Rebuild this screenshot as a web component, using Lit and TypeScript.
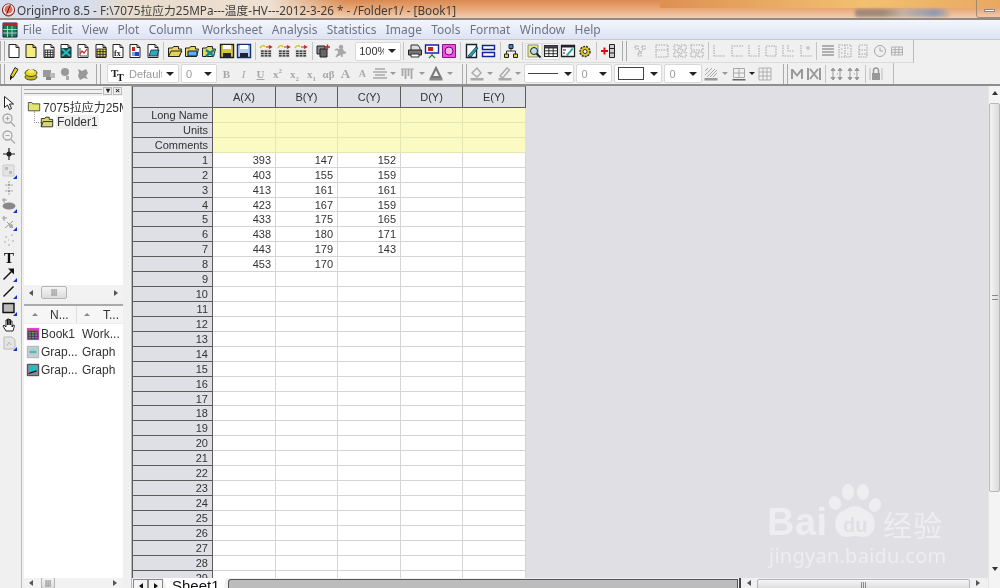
import { LitElement, html, css, svg, SVGTemplateResult } from 'lit';
import { customElement } from 'lit/decorators.js';

const page = (fill = '#fff') => svg`<path d="M3 1.5h7l3 3v10H3z" fill="${fill}" stroke="#222"/><path d="M10 1.5v3h3" fill="none" stroke="#222"/>`;
const gridLines = (x: number, y: number, w: number, h: number, c = '#222') => svg`<path d="M${x} ${y}h${w}v${h}h${-w}zM${x} ${y + h / 3}h${w}M${x} ${y + (2 * h) / 3}h${w}M${x + w / 3} ${y}v${h}M${x + (2 * w) / 3} ${y}v${h}" fill="none" stroke="${c}" stroke-width=".9"/>`;
const folder = (f = '#e8d860') => svg`<path d="M1.5 13.5V5h4l1-1.5h5V6h3l-2 7.5z" fill="${f}" stroke="#222"/>`;
const floppy = (f: string, c: string) => svg`<path d="M1.5 1.5h13v13h-13z" fill="${f}" stroke="${c}" stroke-width="1.4"/><path d="M4 2h8v4H4z" fill="#fff"/><path d="M4 10h8v4H4z" fill="#223"/>`;
const tblArrow = svg`<path d="M3 7h10v7H3z" fill="#333"/>${gridLines(2.5, 7, 11, 7, '#ddd')}<path d="M2 5c2-3 4-3 5-1" fill="none" stroke="#d8c020" stroke-width="1.5"/><path d="M8 4h5M11 2.5 13.500 4 11 5.500" fill="none" stroke="#d02020" stroke-width="1.2"/>`;
const blueCorner = svg`<path d="M16 12v4h-4z" fill="#1030d0"/>`;
const g = '#a8a8a8';
const dash = (d: string) => svg`<path d="${d}" fill="none" stroke="${g}" stroke-dasharray="1.5 1" stroke-width="1.1"/>`;

const I: Record<string, SVGTemplateResult> = {
  new: page(),
  yellow: page('#f4ec80'),
  wks: svg`${page()}${gridLines(4, 7, 8, 7)}`,
  mat: svg`${page()}<path d="M3 5h10v9H3z" fill="#244"/><path d="M4 6l8 7M12 6l-8 7" stroke="#20c0c0" stroke-width="2"/>`,
  graph: svg`${page()}<path d="M5 5v8h7" fill="none" stroke="#555"/><path d="M5 11l2-3 2 2 3-4" fill="none" stroke="#d02020" stroke-width="1.2"/>`,
  ygrid: svg`${page()}<path d="M4 6h9v8H4z" fill="#e8d840"/>${gridLines(4, 6, 9, 8)}`,
  fx: svg`${page()}<text x="4" y="13" font-size="8" font-family="Liberation Serif" font-weight="700" fill="#222">fx</text>`,
  layout: svg`${page()}<path d="M5 4h3v4H5z" fill="#d02020"/><path d="M8 9h4v4H8z" fill="#2040d0"/><path d="M5 9h3v4H5z" fill="#80a0e0"/>`,
  note: svg`${page()}<path d="M4 13l2-6h8l-2 6z" fill="#30a8b8" stroke="#124" stroke-width=".8"/>`,
  open: svg`${folder()}<path d="M4 8h11l-3 5.500H1.500z" fill="#e8d050" stroke="#222"/>`,
  fblue: svg`${folder('#e8d860')}<path d="M4 8h9v5H4z" fill="#58b0f0" stroke="#123"/>`,
  fteal: svg`${folder('#e8d860')}<path d="M5 7l8 6M13 7l-8 6" stroke="#108890" stroke-width="2.2"/>`,
  sav: floppy('#d8c830', '#222'),
  savb: floppy('#b8d0f0', '#123070'),
  tbl: tblArrow,
  stack: svg`<path d="M2 3h8v8H2z" fill="#888" stroke="#222"/><path d="M5 6h7v8H5z" fill="#666" stroke="#222"/><path d="M10 4h5M12.500 1.500v5" stroke="#d02020" stroke-width="1.400"/>`,
  run: svg`<path d="M9 2.500a1.500 1.500 0 1 0 .1 0zM4 14l3-4-1-3 4-1 2 3 2 1M7 10l3 1v3M3 7l3-1" fill="${g}" stroke="${g}" stroke-width="1.500"/>`,
  print: svg`<path d="M4 2h7l2 3v3H4z" fill="#ddd" stroke="#333"/><path d="M1.500 7h13v5h-13z" fill="#777" stroke="#222"/><path d="M4 11h8v3H4z" fill="#fff" stroke="#333"/>`,
  board: svg`<path d="M1.500 2h13v8h-13z" fill="#fff" stroke="#2020b0" stroke-width="1.400"/><path d="M4 4h5v4H4z" fill="#d02020"/><path d="M8 10v2M5 15l3-3 3 3" stroke="#2a7a30" stroke-width="1.200" fill="none"/>`,
  magenta: svg`<path d="M1.500 1.500h13v13h-13z" fill="#f050e0" stroke="#901090"/><circle cx="8" cy="8" r="4" fill="#f8b0f0" stroke="#601060"/>`,
  pen: svg`<path d="M2.500 1.500h10v13h-10z" fill="#fff" stroke="#123" stroke-width="1.400"/><path d="M4 13l8-9 2 1-7 9z" fill="#20a0b0" stroke="#123" stroke-width=".7"/>`,
  twoline: svg`<path d="M1.500 2.500h12v4h-12zM1.500 9.500h12v4h-12z" fill="#fff" stroke="#1020a0" stroke-width="1.400"/>`,
  net: svg`<path d="M8 5v3M3.500 11V8h9v3" fill="none" stroke="#333"/><path d="M6 1.500h4v4H6z" fill="#4080d0" stroke="#222"/><path d="M1.500 11h4v3.500h-4zM10.500 11h4v3.500h-4z" fill="#e8d040" stroke="#222"/>`,
  zoomy: svg`<path d="M2 2h10v12H2z" fill="#f0e878" stroke="#888"/><circle cx="8" cy="8" r="3.500" fill="#bde" stroke="#123"/><path d="M10.500 10.500l4 4" stroke="#123" stroke-width="2"/>`,
  table: svg`<path d="M1.500 2.500h13v11h-13z" fill="#fff" stroke="#222" stroke-width="1.200"/><path d="M1.500 2.500h13v2.500h-13z" fill="#445"/>${gridLines(1.5, 5, 13, 8.5)}`,
  notes: svg`<path d="M1.500 2.500h13v11h-13z" fill="#fff" stroke="#222" stroke-width="1.300"/><path d="M1.500 2.500h13v2h-13z" fill="#223"/><path d="M6 12l6-7 1.500 1-6 7z" fill="#20a0b0"/><path d="M3 7h3M3 10h2" stroke="#222"/>`,
  gear: svg`<circle cx="8" cy="8.500" r="5" fill="#e0c820" stroke="#333" stroke-width="1.500" stroke-dasharray="2 1"/><circle cx="8" cy="8.500" r="2" fill="#fff" stroke="#333"/>`,
  addcol: svg`<path d="M9.500 1.500h5v13h-5zM9.500 5.500h5M9.500 10h5" fill="#ccc" stroke="#222"/><path d="M1 8h7M4.500 4.500v7" stroke="#e01010" stroke-width="2"/>`,
  gnet: dash('M3 3h3v3H3zM10 3h3v3h-3zM6 10h3v3H6zM6 5l2 5M11 6l-3 4'),
  g1: dash('M2 2h12v12H2zM2 7h12'),
  g2: dash('M2 2h5v5H2zM9 2h5v5H9zM2 9h5v5H2zM9 9h5v5H9z'),
  g3: dash('M2 2h12v5H2zM2 9h5v5H2zM9 9h5v5H9z'),
  a1: dash('M3 2v11h11'),
  a2: dash('M14 3H3v10h11'),
  a3: dash('M3 2v11h10V2'),
  a4: dash('M3 3h10v10H3z'),
  a5: dash('M3 2v11h11M8 2v6h6'),
  a6: dash('M3 2v11h11M10 3v4M8 5h5'),
  lines: svg`<path d="M2 3h12M2 6h12M2 9h12M2 12h12" stroke="#999" stroke-width="1.600"/>`,
  lay2: dash('M2 2h12v12H2zM8 2v12M4 6h2M4 10h2M10 5h2M10 11h2'),
  lay3: dash('M4 2h8v12H4zM4 7h8M4 11h8'),
  clock: svg`<circle cx="8" cy="8" r="5.500" fill="none" stroke="${g}"/><path d="M8 4.500V8h3" fill="none" stroke="${g}"/>`,
  gtable: gridLines(2.5, 4, 11, 8, g),
  brush: svg`<path d="M9 1.500l3 2-5 8-2.500-1.500z" fill="#e8d020" stroke="#222"/><path d="M4 10l2.500 1.500L4 14.500z" fill="#111"/>`,
  ystack: svg`<ellipse cx="8" cy="11" rx="6" ry="3" fill="#c8b810" stroke="#444"/><ellipse cx="8" cy="7" rx="6" ry="3.500" fill="#e8d820" stroke="#444"/><ellipse cx="8" cy="5" rx="3" ry="2" fill="#f4ec70"/>`,
  gs1: svg`<path d="M2 4h8v7H2z" fill="#999"/><path d="M9 7h5v5H9z" fill="#bbb"/><path d="M5 11h5v3H5z" fill="#888"/>`,
  gs2: svg`<circle cx="7" cy="6" r="4" fill="#999"/><path d="M8 10h3v4H8z" fill="#aaa"/>`,
  gs3: svg`<path d="M3 3l4 2 4-2 2 4-2 3 2 3-4-1-4 2-2-4 1-3z" fill="#999"/>`,
  tfont: svg`<text x="1" y="11" font-size="11" font-family="Liberation Serif" font-weight="700" fill="#222">T</text><text x="7" y="15" font-size="10" font-family="Liberation Serif" font-weight="700" fill="#111">T</text>`,
  alignc: svg`<path d="M3 3h10M1 6h14M3 9h10M1 12h14" stroke="${g}" stroke-width="1.300"/>`,
  bars: svg`<path d="M2.500 3v7M5.500 3v10M8.500 3v7M11.500 3v10" stroke="${g}" stroke-width="1.800"/><path d="M1 3h13" stroke="${g}"/>`,
  acolor: svg`<path d="M8 2l4.500 9h-9z" fill="none" stroke="#777" stroke-width="2"/><path d="M1.500 12h13v2.500h-13z" fill="#888"/>`,
  fill: svg`<path d="M3 7l5-5 4 5-4 4z" fill="none" stroke="${g}" stroke-width="1.400"/><path d="M1.500 12h13v2.500h-13z" fill="#aaa"/>`,
  penc: svg`<path d="M3 10l7-8 2.500 2-7 8z" fill="none" stroke="${g}" stroke-width="1.300"/><path d="M1.500 12h13v2.500h-13z" fill="#aaa"/>`,
  hatch: svg`<path d="M2 9l7-7M4 11l8-8M7 11l7-7M2 5l3-3M10 11l4-4" stroke="${g}"/><path d="M1.500 12h13v2.500h-13z" fill="#999"/>`,
  bord: svg`<path d="M2.500 2.500h11v9h-11zM8 2.500v9M2.500 7h11" fill="none" stroke="${g}"/><path d="M1.500 13h13v1.500h-13z" fill="#666"/>`,
  gtbl2: gridLines(2, 2, 12, 12, g),
  mm: svg`<path d="M2 3h2l4 5 4-5h2v10h-2V6l-4 5-4-5v7H2z" fill="#999"/>`,
  mx: svg`<path d="M2 2v12M14 2v12" stroke="#999" stroke-width="2"/><path d="M4 3l8 10M12 3l-8 10" stroke="#999" stroke-width="2"/>`,
  upd: svg`<path d="M4 3v10M4 2l-2 2.500h4zM4 14l-2-2.500h4zM11 3v10M11 2L9 4.500h4zM11 14l-2-2.500h4z" fill="#999" stroke="#999"/><path d="M8 8h1" stroke="#999"/>`,
  lock: svg`<path d="M2 2v12M14 2v12" stroke="#bbb"/><path d="M4 7h8v7H4z" fill="#999"/><path d="M5.500 7V4.500a2.500 2.500 0 0 1 5 0V7" fill="none" stroke="#999" stroke-width="1.500"/>`,
  arrow: svg`<path d="M3.500 1.500v11l3-2.500 2 4.500 2-1-2-4.500h4z" fill="#fff" stroke="#222"/>`,
  zin: svg`<circle cx="6.500" cy="6.500" r="4.500" fill="none" stroke="${g}" stroke-width="1.300"/><path d="M9.500 10l4.500 4.500M4.500 6.500h4M6.500 4.500v4" stroke="${g}" stroke-width="1.200"/>`,
  zout: svg`<circle cx="6.500" cy="6.500" r="4.500" fill="none" stroke="${g}" stroke-width="1.300"/><path d="M9.500 10l4.500 4.500M4.500 6.500h4" stroke="${g}" stroke-width="1.200"/>`,
  cross: svg`<circle cx="8" cy="8" r="2.500" fill="#222"/><path d="M8 2v12M2 8h12" stroke="#222" stroke-width="1.200"/>`,
  selbox: svg`<path d="M2 2h11v11H2z" fill="#e4e4e4" stroke="#ccc"/><path d="M4 4h3v3H4zM8 8h3v3H8z" fill="#bbb"/>${blueCorner}`,
  mask: svg`<path d="M8 1v14M4 5h8M4 11h8" stroke="${g}" stroke-dasharray="2 1"/><path d="M8 3.500l-2 2h4zM8 12.500l-2-2h4z" fill="#999"/>`,
  blob: svg`<ellipse cx="8" cy="9" rx="6.500" ry="3.500" fill="#888"/><path d="M3 1v5M1 3h5" stroke="#999"/>${blueCorner}`,
  scat: svg`<path d="M3 1v5M1 3h5M4 13l8-7M6 7l6 6" stroke="#999"/><circle cx="10" cy="11" r="2" fill="#aaa"/>${blueCorner}`,
  dots: svg`<path d="M4 5h2M10 3h2M3 10h2M7 8h1M11 9h2M7 13h2" stroke="#aaa"/>`,
  T: svg`<text x="8" y="14" text-anchor="middle" font-size="15" font-family="Liberation Serif" font-weight="700" fill="#111">T</text>`,
  arr2: svg`<path d="M2.500 13.500l9-9" stroke="#111" stroke-width="1.500"/><path d="M13 2.500v6l-6-6z" fill="#111"/>${blueCorner}`,
  line: svg`<path d="M2.500 13.500l10-10" stroke="#111" stroke-width="1.400"/>${blueCorner}`,
  rect: svg`<path d="M2 3.500h11v9H2z" fill="#bbb" stroke="#111" stroke-width="1.400"/>${blueCorner}`,
  hand: svg`<path d="M5 14l-3-5 1-1 2 2V3h1.500v5-6H8v6-5.500h1.500V8 4H11v6l1-2 1.500.5-1.500 5.500z" fill="#fff" stroke="#111" stroke-width=".9"/>`,
  gdoc: svg`<path d="M3 2h8l3 3v9H3z" fill="#e4e4e4" stroke="#bbb"/><path d="M6 11l2-4 2 3" fill="none" stroke="#bbb"/>${blueCorner}`,
  book: svg`<path d="M1 1h14v14H1z" fill="#e040e0"/><path d="M2.500 3h11v10.500h-11z" fill="#7a8a70"/><path d="M2.500 3h11v2h-11z" fill="#c05050"/>${gridLines(2.5, 5, 11, 8.5, '#334')}`,
  grapa: svg`<path d="M1.500 1.500h13v13h-13z" fill="#c8ccd0" stroke="#aaa"/><path d="M4 4h8v7H4z" fill="#90d8d8"/><path d="M4 8h8" stroke="#666"/>`,
  grapb: svg`<path d="M1.500 1.500h13v13h-13z" fill="#889" stroke="#333"/><path d="M4 3h8v6H4z" fill="#10c8c8"/><path d="M3 12l9-3" stroke="#111" stroke-width="1.500"/>`,
  foldopen: svg`<path d="M1.500 13.500V4h4l1-1.500h4V5h4v8.500z" fill="#d8d870" stroke="#222"/><path d="M1.500 13.500l2-6h11" fill="none" stroke="#222"/>`,
  foldclosed: svg`<path d="M1.500 13.500V4h4l1 1.500h8v8z" fill="#e4e470" stroke="#444"/>`,
  menuGrid: svg`<path d="M1 1h14v14H1z" fill="#1e7a52" stroke="#123"/><path d="M1 1h14v3H1z" fill="#c02020"/><path d="M1 7.500h14M1 11h14M5.500 4v11M10 4v11" stroke="#cde" stroke-width=".8"/>`,
  appIcon: svg`<circle cx="8" cy="8.500" r="6.500" fill="#e07060" stroke="#702020"/><path d="M8 3a5 5 0 1 0 .1 0" fill="none" stroke="#fff" stroke-width="1.200"/><path d="M6 13l4-10" stroke="#401010"/>`,
};

const tb1: (string | number)[] = ['new', 'yellow', 'wks', 'mat', 'graph', 'ygrid', 'fx', 'layout', 'note', 0,
  'open', 'fblue', 'fteal', 'sav', 'savb', 0, 'tbl', 'tbl', 'tbl', 0, 'stack', 'run'];
const tb1b: (string | number)[] = [0, 'print', 'board', 'magenta', 0, 'pen', 'twoline', 0, 'net', 0,
  'zoomy', 'table', 'notes', 'gear', 0, 'addcol'];
const tb1c: (string | number)[] = ['g1', 'g2', 'g3', 0, 'a1', 'a2', 'a3', 'a4', 'a5', 'a6', 0, 'lines', 'lay2', 'lay3', 'clock', 'gtable'];
const tools = ['arrow', 'zin', 'zout', 'cross', 'selbox', 'mask', 'blob', 'scat', 'dots', 'T', 'arr2', 'line', 'rect', 'hand', 'gdoc'];

const menus = ['File', 'Edit', 'View', 'Plot', 'Column', 'Worksheet', 'Analysis', 'Statistics', 'Image', 'Tools', 'Format', 'Window', 'Help'];
const colA = [393, 403, 413, 423, 433, 438, 443, 453];
const colB = [147, 155, 161, 167, 175, 180, 179, 170];
const colC = [152, 159, 161, 159, 165, 171, 143];
const meta = ['Long Name', 'Units', 'Comments'];
const numRows = Array.from({ length: 29 }, (_, i) => i + 1);

@customElement('app-root')
export class AppRoot extends LitElement {
  static styles = css`
    :host {
      display: block;
      width: 1000px;
      height: 588px;
      overflow: hidden;
      position: relative;
      background: #f0f0f0;
      font-family: "Liberation Sans", "Noto Sans CJK SC", sans-serif;
      filter: blur(0.45px);
    }
    svg { display: block; flex: none; }
    .title {
      height: 18px;
      display: flex;
      align-items: center;
      gap: 1px;
      padding-left: 1px;
      position: relative;
      background:
        linear-gradient(90deg, #d6deee 0, #d6deee 85px, #e8dccc 130px, #eee0d2 270px, rgba(238, 224, 210, 0) 345px),
        linear-gradient(180deg, #d98a52 0, #e9a878 9px, #f0cfb4 18px);
      font: 11.75px "Noto Sans", "Noto Sans CJK SC", sans-serif;
      color: #3c3c3c;
      white-space: nowrap;
      border-bottom: 2px solid #8f8b88;
    }
    .title .warm {
      position: absolute;
      left: 660px; right: 0; top: 0; height: 8px;
      background: linear-gradient(90deg, #de9050, #f2c070 60%, #e8a860);
    }
    .title .smear {
      position: absolute;
      left: 855px; top: 9px; width: 95px; height: 8px;
      background: linear-gradient(90deg, #8a7a70 0, #8a7a70 30%, #b8b0a8 50%, #7090c0 85%, #d0b090);
      border-radius: 3px;
      filter: blur(1.5px);
      opacity: .75;
    }
    .title .text { position: relative; }
    .title .min {
      position: absolute;
      right: -1px; top: -1px;
      width: 25px; height: 19px;
      box-sizing: border-box;
      border: 1px solid #a08a70;
      border-radius: 0 0 0 3px;
    }
    .title .min::after {
      content: '';
      position: absolute;
      left: 7px; top: 9px;
      width: 11px; height: 3px;
      background: #fff;
      border: 1px solid #888;
      box-sizing: border-box;
    }
    .menu {
      height: 19px;
      display: flex;
      align-items: center;
      background: linear-gradient(180deg, #f4f6fc, #dde3f4);
      font: 12px "Noto Sans", sans-serif;
      color: #6e7484;
      border-bottom: 1px solid #c8c8c8;
    }
    .menu .ico { margin: 0 0 0 2px; }
    .menu span { padding: 0 4.65px; }
    .bar {
      height: 22px;
      display: flex;
      align-items: center;
      background: #f0f0f0;
    }
    .bar.one { border-bottom: 1px solid #dcdcdc; width: 913px; border-right: 1px solid #bbb; }
    .bar.two { height: 21px; width: 893px; border-right: 1px solid #bbb; }
    .rowline { background: #f0f0f0; }
    .rowline.second { border-bottom: 2px solid #8e8e8e; }
    .slot { width: 17.3px; height: 17px; display: flex; align-items: center; justify-content: center; flex: none; }
    .slot.on { background: #f8f8f8; outline: 1px solid #ddd; outline-offset: -1px; }
    .sep { width: 1px; height: 18px; margin: 0 2px; background: #c4c4c4; flex: none; }
    .grip { width: 3px; height: 20px; margin: 0 .5px 0 0; border-left: 1px solid #aaa; border-right: 1px solid #aaa; flex: none; }
    .grip.fontbar { margin: 0 6px 0 4px; }
    .grip.fillbar { margin: 0 1px 0 6px; }
    .grip.layerbar { margin: 0 0 0 10px; }
    .grip.plotbar { margin: 0 4px 0 6px; }
    .spc { flex: none; }
    .combo {
      height: 19px;
      box-sizing: border-box;
      display: flex;
      align-items: center;
      background: #fff;
      border: 1px solid #d8d8d8;
      border-radius: 2px;
      flex: none;
      overflow: hidden;
      font-size: 11px;
      color: #333;
      position: relative;
    }
    .combo .val { flex: 1; min-width: 0; padding-left: 4px; white-space: nowrap; overflow: hidden; }
    .combo .val.grey { color: #999; font-size: 11px; }
    .combo .swatchline { margin-left: 3px; width: 30px; height: 1px; background: #444; flex: none; }
    .combo .swatchbox { margin-left: 3px; width: 24px; height: 11px; border: 1px solid #444; flex: none; }
    .drop { width: 0; height: 0; border: 4px solid transparent; border-top: 4px solid #222; border-bottom: 0; margin: 0 4px; flex: none; }
    .drop.tight { margin: 0 3px; }
    .drop.small { margin: 0 1px; border-width: 3px; }
    .dropg { width: 0; height: 0; border: 3px solid transparent; border-top: 3px solid #999; border-bottom: 0; margin: 0 3px 0 2px; flex: none; }
    .fm { width: 17px; text-align: center; color: #a8a8a8; font: 700 11px "Liberation Serif", serif; flex: none; }
    .fm i { font-weight: 400; }
    .fm sup, .fm sub { font-size: 7px; line-height: 0; }
    .fm.u { text-decoration: underline; }
    .fm.big { font-size: 13px; }
    .fm.small { font-size: 10px; }
    .body { display: flex; height: 502px; }
    .tools { width: 21px; box-sizing: border-box; padding: 8px 4px 0 0; display: flex; flex-direction: column; align-items: center; flex: none; }
    .tools .slot { height: 17.15px; }
    .panel {
      width: 102px;
      flex: none;
      box-sizing: border-box;
      border-left: 1px solid #c0c0c0;
      padding-left: 2px;
      display: flex;
      flex-direction: column;
    }
    .phead { height: 10px; display: flex; align-items: center; gap: 1px; padding-right: 1px; }
    .phead .lines { flex: 1; height: 3px; border-top: 1px solid #aaa; border-bottom: 1px solid #aaa; }
    .phead b {
      width: 9px; height: 8px;
      border: 1px solid #bbb;
      box-sizing: border-box;
      font: 700 8px/6px "Liberation Sans", sans-serif;
      text-align: center;
      color: #222;
      background: #eee;
    }
    .tree {
      height: 189px;
      background: #fff;
      font-size: 12px;
      color: #333;
      overflow: hidden;
    }
    .tnode { display: flex; align-items: center; height: 16px; white-space: nowrap; gap: 2px; }
    .tnode.root { padding-left: 3px; margin-top: 2px; }
    .tnode.child { padding-left: 16px; position: relative; }
    .tnode.child::before {
      content: '';
      position: absolute;
      left: 10px; top: -3px;
      width: 6px; height: 11px;
      border-left: 1px dotted #999;
      border-bottom: 1px dotted #999;
    }
    .tnode.child span { background: #f0f0f0; padding: 0 1px; }
    .hbar { height: 15px; display: flex; align-items: center; background: #f2f2f2; position: relative; }
    .hbar.low { height: 10px; overflow: hidden; }
    .thumb {
      box-sizing: border-box;
      height: 13px;
      background: linear-gradient(180deg, #f4f4f4, #dcdcdc);
      border: 1px solid #b4b4b4;
      border-radius: 2px;
      color: #555;
      font: 8px/10px "Liberation Sans", sans-serif;
      text-align: center;
      flex: none;
    }
    .hbar .thumb.big { width: 26px; margin: 0 47px 0 8px; }
    .hbar .thumb.small { width: 14px; height: 12px; margin: 0 58px 0 8px; }
    .hbar .al { margin-left: 5px; }
    .al { width: 0; height: 0; border: 3px solid transparent; border-right: 4px solid #555; border-left: 0; flex: none; }
    .ar { width: 0; height: 0; border: 3px solid transparent; border-left: 4px solid #555; border-right: 0; flex: none; }
    .split { height: 6px; border-bottom: 2px solid #aaa; box-sizing: border-box; }
    .list { flex: 1; background: #fff; font-size: 12px; color: #333; overflow: hidden; }
    .lhead { height: 18px; box-sizing: border-box; display: flex; background: #f6f6f6; border-bottom: 1px solid #eee; }
    .lhead div { display: flex; align-items: center; white-space: nowrap; box-sizing: border-box; }
    .lhead .n { width: 53px; border-right: 1px solid #ddd; padding-left: 8px; gap: 12px; }
    .lhead .t { flex: 1; padding-left: 7px; gap: 13px; }
    .tri { width: 0; height: 0; border: 3px solid transparent; border-bottom: 3px solid #888; border-top: 0; }
    .lrows { padding-top: 1px; }
    .lrow { display: flex; align-items: center; height: 18px; white-space: nowrap; padding-left: 2px; }
    .lrow .nm { width: 41px; padding-left: 1px; }
    .lrow .tp { padding-left: 0; }
    .lgap { width: 9px; flex: none; background: #f0f0f0; border-right: 1px solid #b8b8b8; box-sizing: border-box; }
    .main { flex: 1; position: relative; background: #dfdfe4; display: flex; flex-direction: column; min-width: 0; }
    .work { flex: 1; overflow: hidden; min-height: 0; }
    .sheet {
      display: grid;
      width: 394px;
      grid-template-columns: 81px 63px 62px 63px 62px 63px;
      grid-template-rows: 22px;
      grid-auto-rows: 14.93px;
      font: 11px/15px "Liberation Sans", sans-serif;
      color: #333;
      background: #fff;
    }
    .sheet > div { box-sizing: border-box; text-align: right; padding-right: 4px; white-space: nowrap; }
    .sheet .hd {
      background: #dfdfe6;
      border-right: 1px solid #5c5c5c;
      border-bottom: 1px solid #5c5c5c;
      border-top: 1px solid #9a9a9a;
      text-align: center;
      padding: 0;
      line-height: 21px;
    }
    .sheet .corner { border-left: 1px solid #5c5c5c; }
    .rh {
      background: #dfdfe6;
      border-left: 1px solid #5c5c5c;
      border-right: 1px solid #5c5c5c;
      border-bottom: 1px solid #5c5c5c;
    }
    .cell { border-right: 1px solid #d4d4d4; border-bottom: 1px solid #d4d4d4; }
    .ym { background: #fafac2; border-right: 1px solid #e6e6b4; border-bottom: 1px solid #e6e6b4; }
    .tabs {
      height: 10px;
      flex: none;
      display: flex;
      align-items: flex-start;
      background: #f0f0f0;
      overflow: hidden;
      position: relative;
      padding-left: 1px;
    }
    .tabbtn { width: 15px; height: 12px; border: 1px solid #888; box-sizing: border-box; background: #f4f4f4; display: flex; align-items: center; justify-content: center; flex: none; border-bottom: 0; margin-top: 1px; }
    .tabbtn .al, .tabbtn .ar { border-left-color: #111; border-right-color: #111; }
    .sheetTab {
      width: 63px;
      flex: none;
      height: 14px;
      padding-left: 9px;
      box-sizing: border-box;
      background: #fff;
      font: 15px/15px "Liberation Sans", sans-serif;
      color: #111;
      white-space: nowrap;
      clip-path: polygon(0 0, 100% 0, calc(100% - 3px) 100%, 5px 100%);
    }
    .tabrest {
      width: 510px;
      flex: none;
      height: 12px;
      margin: 1px 0 0 2px;
      background: #bcbcbc;
      border: 1px solid #555;
      border-bottom: 0;
      border-radius: 3px 0 0 0;
      box-sizing: border-box;
    }
    .bscroll {
      flex: 1;
      display: flex;
      align-items: center;
      padding: 0 8px 0 6px;
      border-left: 2px solid #444;
      margin-left: 1px;
      gap: 6px;
      height: 10px;
    }
    .bscroll .thumb { flex: 1; height: 11px; margin-top: 2px; border-radius: 2px 2px 0 0; }
    .vscroll {
      width: 12px;
      flex: none;
      background: #f4f4f4;
      display: flex;
      flex-direction: column;
      align-items: center;
      border-left: 1px solid #e4e4e4;
      box-sizing: border-box;
    }
    .vscroll .au { width: 0; height: 0; border: 3px solid transparent; border-bottom: 4px solid #333; border-top: 0; margin-top: 5px; }
    .vscroll .ad { width: 0; height: 0; border: 3px solid transparent; border-top: 4px solid #333; border-bottom: 0; }
    .vthumb {
      width: 11px;
      height: 389px;
      margin: 8px 0 75px;
      box-sizing: border-box;
      background: linear-gradient(90deg, #f4f4f4, #dcdcdc);
      border: 1px solid #b8b8b8;
      border-radius: 2px;
      display: flex;
      align-items: center;
      justify-content: center;
    }
    .vthumb::after { content: ''; width: 6px; height: 5px; border-top: 1px solid #888; border-bottom: 1px solid #888; box-sizing: border-box; }
    .mark {
      position: absolute;
      left: 767px; top: 480px;
      width: 185px; height: 90px;
      color: #eeeef0;
      pointer-events: none;
    }
    .mark .bai { position: absolute; left: 0; top: 22px; font: 700 38px/40px "Liberation Sans", sans-serif; letter-spacing: .5px; }
    .mark .paw { position: absolute; left: 61px; top: 0; }
    .mark .du { position: absolute; left: 76px; top: 35px; font: 700 20px/20px "Liberation Sans", sans-serif; color: #dfdfe4; }
    .mark .jy { position: absolute; left: 116px; top: 27px; font: 29px/34px "Noto Sans CJK SC", sans-serif; letter-spacing: 1px; white-space: nowrap; }
    .mark .url { position: absolute; left: 2px; top: 64px; font: 20px/24px "Noto Sans", sans-serif; letter-spacing: .25px; white-space: nowrap; }
  `;

  icon(n: string, size = 16) {
    return html`<svg class="ico" viewBox="0 0 16 16" width=${size} height=${size}>${I[n]}</svg>`;
  }

  bar(items: (string | number)[]) {
    return items.map((n) =>
      n === 0
        ? html`<i class="sep"></i>`
        : html`<div class="slot ${n === 'zoomy' || n === 'table' ? 'on' : ''}">${this.icon(n as string)}</div>`
    );
  }

  cell(v?: number) {
    return html`<div class="cell">${v ?? ''}</div>`;
  }

  slot(n: string) {
    return html`<div class="slot">${this.icon(n)}</div>`;
  }

  dg() {
    return html`<i class="dropg"></i>`;
  }

  render() {
    return html`
      <div class="title">
        <i class="warm"></i><i class="smear"></i>
        ${this.icon('appIcon', 15)}
        <span class="text">OriginPro 8.5 - F:\\7075拉应力25MPa---温度-HV---2012-3-26 * - /Folder1/ - [Book1]</span>
        <i class="min"></i>
      </div>
      <div class="menu">
        ${this.icon('menuGrid')}
        ${menus.map((m) => html`<span>${m}</span>`)}
      </div>
      <div class="rowline">
        <div class="bar one">
          <i class="grip"></i>
          ${this.bar(tb1)}
          <i class="spc" style="width:6px"></i>
          <div class="combo" style="width:46px">
            <span class="val" style="padding-left:3px">100%</span><i class="drop"></i>
          </div>
          ${this.bar(tb1b)}
          <i class="grip plotbar"></i>
          ${this.slot('gnet')}
          <i class="spc" style="width:5px"></i>
          ${this.bar(tb1c)}
        </div>
      </div>
      <div class="rowline second">
        <div class="bar two">
          <i class="grip"></i>
          ${['brush', 'ystack', 'gs1', 'gs2', 'gs3'].map((n) => this.slot(n))}
          <i class="grip fontbar"></i>
          <div class="combo" style="width:72px">
            <span style="margin-left:2px">${this.icon('tfont')}</span>
            <span class="val grey" style="padding-left:3px">Default</span><i class="drop"></i>
          </div>
          <i class="spc" style="width:2px"></i>
          <div class="combo" style="width:36px"><span class="val grey">0</span><i class="drop"></i></div>
          <i class="spc" style="width:1px"></i>
          <span class="fm">B</span><span class="fm"><i>I</i></span><span class="fm u">U</span>
          <span class="fm">x<sup>2</sup></span><span class="fm">x<sub>2</sub></span><span class="fm">x<sub>1</sub></span>
          <span class="fm">αβ</span>
          <span class="fm big">A</span><span class="fm small">A</span>
          ${this.slot('alignc')}${this.dg()}${this.slot('bars')}${this.dg()}${this.slot('acolor')}${this.dg()}
          <i class="grip fillbar"></i>
          ${this.slot('fill')}${this.dg()}${this.slot('penc')}${this.dg()}
          <div class="combo" style="width:50px">
            <span class="swatchline"></span>
            <span class="val grey" style="padding-left:3px">S</span><i class="drop tight"></i>
          </div>
          <i class="spc" style="width:2px"></i>
          <div class="combo" style="width:36px"><span class="val grey">0</span><i class="drop"></i></div>
          <i class="spc" style="width:2px"></i>
          <div class="combo" style="width:48px">
            <span class="swatchbox"></span>
            <span class="val grey" style="padding-left:2px">N</span><i class="drop tight"></i>
          </div>
          <i class="spc" style="width:2px"></i>
          <div class="combo" style="width:38px"><span class="val grey">0</span><i class="drop"></i></div>
          ${this.slot('hatch')}${this.dg()}${this.slot('bord')}<i class="drop small"></i>${this.slot('gtbl2')}
          <i class="grip layerbar"></i>
          ${['mm', 'mx'].map((n) => this.slot(n))}<i class="sep"></i>
          ${this.slot('upd')}${this.slot('upd')}<i class="sep"></i>
          ${this.slot('lock')}
        </div>
      </div>
      <div class="body">
        <div class="tools">${tools.map((n) => this.slot(n))}</div>
        <div class="panel">
          <div class="phead"><i class="lines"></i><b>▾</b><b>×</b></div>
          <div class="tree">
            <div class="tnode root">${this.icon('foldclosed', 14)}<span>7075拉应力25MPa</span></div>
            <div class="tnode child">${this.icon('foldopen', 14)}<span>Folder1</span></div>
          </div>
          <div class="hbar">
            <i class="al"></i>
            <div class="thumb big">|||</div>
            <i class="ar"></i>
          </div>
          <div class="split"></div>
          <div class="list">
            <div class="lhead">
              <div class="n"><i class="tri"></i>N...</div>
              <div class="t"><i class="tri"></i>T...</div>
            </div>
            <div class="lrows">
              ${[['book', 'Book1', 'Work...'], ['grapa', 'Grap...', 'Graph'], ['grapb', 'Grap...', 'Graph']].map(
                ([ic, nm, tp]) => html`<div class="lrow">${this.icon(ic, 14)}<span class="nm">${nm}</span><span class="tp">${tp}</span></div>`
              )}
            </div>
          </div>
          <div class="hbar low">
            <i class="al"></i>
            <div class="thumb small">|||</div>
            <i class="ar"></i>
          </div>
        </div>
        <div class="lgap"></div>
        <div class="main">
          <div class="work">
            <div class="sheet">
              <div class="hd corner"></div>
              ${['A(X)', 'B(Y)', 'C(Y)', 'D(Y)', 'E(Y)'].map((h) => html`<div class="hd">${h}</div>`)}
              ${meta.map(
                (m) => html`<div class="rh">${m}</div>${[0, 1, 2, 3, 4].map(() => html`<div class="ym"></div>`)}`
              )}
              ${numRows.map(
                (r) => html`<div class="rh">${r}</div>
                  ${this.cell(colA[r - 1])}${this.cell(colB[r - 1])}${this.cell(colC[r - 1])}${this.cell()}${this.cell()}`
              )}
            </div>
          </div>
          <div class="tabs">
            <div class="tabbtn"><i class="al"></i></div>
            <div class="tabbtn"><i class="ar"></i></div>
            <div class="sheetTab">Sheet1</div>
            <div class="tabrest"></div>
            <div class="bscroll">
              <i class="al"></i>
              <div class="thumb">|||</div>
              <i class="ar"></i>
            </div>
          </div>
        </div>
        <div class="vscroll">
          <i class="au"></i>
          <div class="vthumb"></div>
          <i class="ad"></i>
        </div>
      </div>
      <div class="mark">
        <span class="bai">Bai</span>
        <svg class="paw" width="56" height="60" viewBox="0 0 56 60">
          <ellipse cx="20" cy="12" rx="6" ry="8" fill="currentColor" />
          <ellipse cx="35" cy="12" rx="6" ry="8" fill="currentColor" />
          <ellipse cx="7" cy="23" rx="6" ry="7" fill="currentColor" transform="rotate(-20 7 23)" />
          <ellipse cx="47" cy="25" rx="6" ry="7" fill="currentColor" transform="rotate(20 47 25)" />
          <path d="M27 26c5 0 8 3 14 6 9 5 8 25-6 25-3 0-5-1-8-1s-5 1-8 1c-14 0-15-20-6-25 6-3 9-6 14-6z" fill="currentColor" />
        </svg>
        <span class="du">du</span>
        <span class="jy">经验</span>
        <span class="url">jingyan.baidu.com</span>
      </div>
    `;
  }
}
